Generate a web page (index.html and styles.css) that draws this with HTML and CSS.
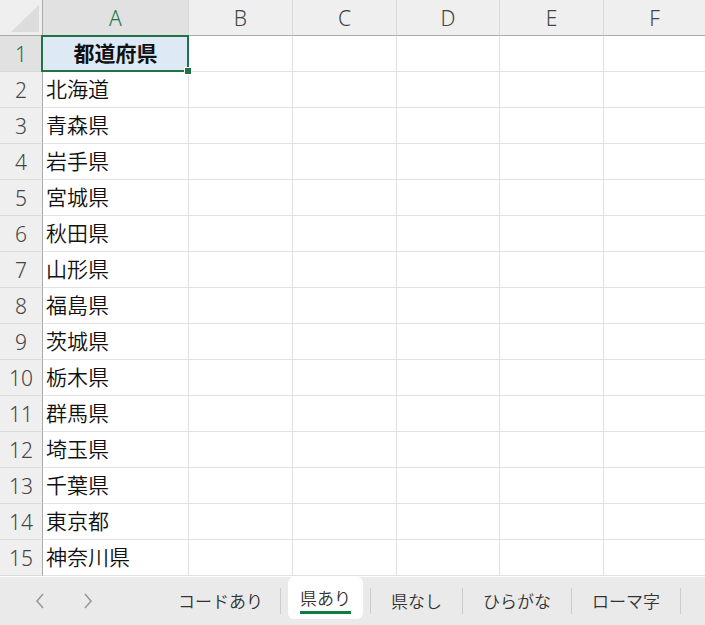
FILE: index.html
```html
<!DOCTYPE html>
<html lang="ja">
<head>
<meta charset="UTF-8">
<title>都道府県</title>
<link rel="stylesheet" href="styles.css">
</head>
<body>
<div class="sheet">
  <div class="grid">
    <div class="corner"><span class="tri"></span></div>
    <div class="colhead active">A</div>
    <div class="colhead">B</div>
    <div class="colhead">C</div>
    <div class="colhead">D</div>
    <div class="colhead">E</div>
    <div class="colhead last">F</div>

    <div class="rowhead active">1</div>
    <div class="cell title">都道府県<span class="sel"><span class="handle"></span></span></div>
    <div class="cell"></div><div class="cell"></div><div class="cell"></div><div class="cell"></div><div class="cell"></div>

    <div class="rowhead">2</div><div class="cell">北海道</div>
    <div class="cell"></div><div class="cell"></div><div class="cell"></div><div class="cell"></div><div class="cell"></div>
    <div class="rowhead">3</div><div class="cell">青森県</div>
    <div class="cell"></div><div class="cell"></div><div class="cell"></div><div class="cell"></div><div class="cell"></div>
    <div class="rowhead">4</div><div class="cell">岩手県</div>
    <div class="cell"></div><div class="cell"></div><div class="cell"></div><div class="cell"></div><div class="cell"></div>
    <div class="rowhead">5</div><div class="cell">宮城県</div>
    <div class="cell"></div><div class="cell"></div><div class="cell"></div><div class="cell"></div><div class="cell"></div>
    <div class="rowhead">6</div><div class="cell">秋田県</div>
    <div class="cell"></div><div class="cell"></div><div class="cell"></div><div class="cell"></div><div class="cell"></div>
    <div class="rowhead">7</div><div class="cell">山形県</div>
    <div class="cell"></div><div class="cell"></div><div class="cell"></div><div class="cell"></div><div class="cell"></div>
    <div class="rowhead">8</div><div class="cell">福島県</div>
    <div class="cell"></div><div class="cell"></div><div class="cell"></div><div class="cell"></div><div class="cell"></div>
    <div class="rowhead">9</div><div class="cell">茨城県</div>
    <div class="cell"></div><div class="cell"></div><div class="cell"></div><div class="cell"></div><div class="cell"></div>
    <div class="rowhead">10</div><div class="cell">栃木県</div>
    <div class="cell"></div><div class="cell"></div><div class="cell"></div><div class="cell"></div><div class="cell"></div>
    <div class="rowhead">11</div><div class="cell">群馬県</div>
    <div class="cell"></div><div class="cell"></div><div class="cell"></div><div class="cell"></div><div class="cell"></div>
    <div class="rowhead">12</div><div class="cell">埼玉県</div>
    <div class="cell"></div><div class="cell"></div><div class="cell"></div><div class="cell"></div><div class="cell"></div>
    <div class="rowhead">13</div><div class="cell">千葉県</div>
    <div class="cell"></div><div class="cell"></div><div class="cell"></div><div class="cell"></div><div class="cell"></div>
    <div class="rowhead">14</div><div class="cell">東京都</div>
    <div class="cell"></div><div class="cell"></div><div class="cell"></div><div class="cell"></div><div class="cell"></div>
    <div class="rowhead">15</div><div class="cell">神奈川県</div>
    <div class="cell"></div><div class="cell"></div><div class="cell"></div><div class="cell"></div><div class="cell"></div>
  </div>

  <div class="tabbar">
    <div class="nav">
      <svg width="10" height="16" viewBox="0 0 10 16"><path d="M8 1 L2 8 L8 15" fill="none" stroke="#9a9a9a" stroke-width="1.6"/></svg>
      <svg width="10" height="16" viewBox="0 0 10 16"><path d="M2 1 L8 8 L2 15" fill="none" stroke="#9a9a9a" stroke-width="1.6"/></svg>
    </div>
    <div class="tab t1">コードあり</div>
    <div class="sep"></div>
    <div class="tab current"><span>県あり</span></div>
    <div class="sep"></div>
    <div class="tab t3">県なし</div>
    <div class="sep"></div>
    <div class="tab t4">ひらがな</div>
    <div class="sep"></div>
    <div class="tab t5">ローマ字</div>
    <div class="sep"></div>
  </div>
</div>
</body>
</html>
```

FILE: styles.css
```css
body {
  margin: 0;
  background-color: #ffffff;
  font-family: "Noto Sans", "Noto Sans CJK JP", sans-serif;
  overflow: hidden;
}
.sheet {
  width: 705px;
  height: 625px;
  display: flex;
  flex-direction: column;
}
.grid {
  display: grid;
  grid-template-columns: 43px 146px 104px 104px 103px 104px 1fr;
  grid-template-rows: 36px repeat(15, 36px);
}
.corner {
  background-color: #efefef;
  border-right: 1px solid #ababab;
  border-bottom: 1px solid #ababab;
  position: relative;
}
.corner .tri {
  position: absolute;
  right: 3px;
  bottom: 3px;
  width: 0;
  height: 0;
  border-left: 28px solid transparent;
  border-bottom: 27px solid #dcdcdc;
}
.colhead {
  background-color: #efefef;
  border-right: 1px solid #dadada;
  border-bottom: 1px solid #ababab;
  color: #444444;
  font-size: 21px;
  font-weight: 300;
  display: flex;
  align-items: center;
  justify-content: center;
}
.colhead.last {
  border-right: none;
}
.colhead.active {
  background-color: #e1e1e1;
  color: #217346;
}
.rowhead {
  background-color: #efefef;
  border-right: 1px solid #ababab;
  border-bottom: 1px solid #dadada;
  color: #444444;
  font-size: 21px;
  font-weight: 300;
  display: flex;
  align-items: center;
  justify-content: center;
}
.rowhead.active {
  background-color: #e1e1e1;
  color: #217346;
}
.cell {
  border-right: 1px solid #e1e1e1;
  border-bottom: 1px solid #e1e1e1;
  font-family: "Noto Sans CJK JP", sans-serif;
  font-size: 21px;
  font-weight: 350;
  line-height: 32px;
  color: #111111;
  padding-left: 3px;
  white-space: nowrap;
}
.cell:nth-child(7n) {
  border-right: none;
}
.cell.title {
  background-color: #dde9f5;
  font-weight: 700;
  text-align: center;
  padding-left: 0;
  position: relative;
}
.sel {
  position: absolute;
  top: -1px;
  left: -2px;
  right: -1px;
  bottom: -1px;
  border: 2px solid #217346;
}
.handle {
  position: absolute;
  right: -5px;
  bottom: -5px;
  width: 6px;
  height: 6px;
  background-color: #217346;
  border: 1px solid #ffffff;
}
.tabbar {
  flex: 1;
  margin-top: 1px;
  background-color: #eaeaea;
  display: flex;
  align-items: center;
  font-family: "Noto Sans CJK JP", sans-serif;
  font-size: 17px;
  font-weight: 350;
  color: #333333;
}
.nav {
  width: 161px;
  display: flex;
  gap: 38px;
  padding-left: 35px;
  box-sizing: border-box;
  align-items: center;
}
.tab {
  padding: 0 17px;
  line-height: 30px;
}
.tab.t3 {
  padding: 0 20px;
}
.tab.t4,
.tab.t5 {
  padding: 0 20px;
}
.tab.current {
  align-self: flex-start;
  height: 42px;
  margin: 0 7px;
  padding: 0 12px;
  background-color: #ffffff;
  border-radius: 6px;
  box-sizing: border-box;
  display: flex;
  align-items: center;
}
.tab.current span {
  border-bottom: 3px solid #107c41;
  line-height: 26px;
  margin-top: 3px;
}
.sep {
  width: 1px;
  height: 26px;
  background-color: #cccccc;
}
```
